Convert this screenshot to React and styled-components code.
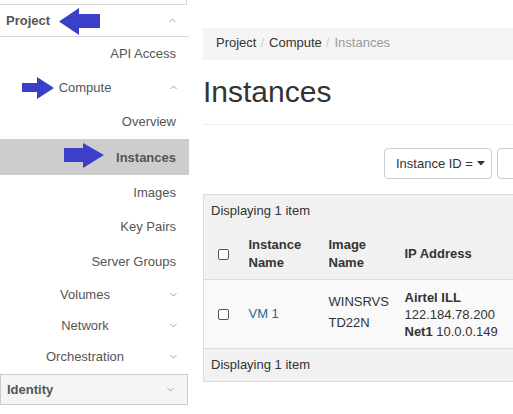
import React from 'react';
import styled, { createGlobalStyle } from 'styled-components';

const GlobalStyle = createGlobalStyle`
  html, body {
    margin: 0;
    padding: 0;
    background: #fff;
    overflow: hidden;
  }
  body {
    font-family: "Liberation Sans", Arial, sans-serif;
    font-size: 13px;
    color: #333;
  }
`;

const Page = styled.div`
  display: flex;
  width: 513px;
  height: 414px;
  overflow: hidden;
`;

const Sidebar = styled.nav`
  position: relative;
  width: 189px;
  flex-shrink: 0;
  display: flex;
  flex-direction: column;
`;

const TopEdge = styled.div`
  height: 4px;
  width: 186px;
  border-bottom: 1px solid #d6d6d6;
  border-right: 1px solid #d6d6d6;
`;

const PanelHead = styled.div`
  display: flex;
  align-items: center;
  justify-content: space-between;
  height: ${(p) => p.h}px;
  padding: 0 13px 0 6px;
  font-weight: bold;
  color: #555;
  background: ${(p) => (p.boxed ? '#f5f5f5' : '#fff')};
  border-bottom: 1px solid #d6d6d6;
  ${(p) =>
    p.boxed &&
    `
    border: 1px solid #ccc;
    width: 188px;
    box-sizing: border-box;
    margin-top: 3px;
  `}
`;

const GroupHead = styled.div`
  display: flex;
  align-items: center;
  height: ${(p) => p.h}px;
  color: #555;
  span {
    width: 170px;
    text-align: center;
  }
`;

const Item = styled.div`
  display: flex;
  align-items: center;
  justify-content: flex-end;
  height: ${(p) => p.h}px;
  padding-right: 13px;
  color: #555;
  background: ${(p) => (p.active ? '#cdcdcd' : 'transparent')};
  font-weight: ${(p) => (p.active ? 'bold' : 'normal')};
`;

const Arrow = styled.svg`
  position: absolute;
  left: ${(p) => p.x}px;
  top: ${(p) => p.y}px;
`;

const Caret = ({ up }) => (
  <svg width="7" height="5" viewBox="0 0 7 5">
    <path
      d={up ? 'M0.5 4 L3.5 1 L6.5 4' : 'M0.5 1 L3.5 4 L6.5 1'}
      fill="none"
      stroke="#a0a0a0"
      strokeWidth="1"
    />
  </svg>
);

const Main = styled.main`
  margin-left: 14px;
  width: 420px;
  flex-shrink: 0;
`;

const Breadcrumb = styled.div`
  margin-top: 28px;
  height: 32px;
  box-sizing: border-box;
  background: #f5f5f5;
  display: flex;
  align-items: flex-start;
  padding: 7px 0 0 13px;
  line-height: 15px;
  color: #333;
  white-space: nowrap;
`;

const Sep = styled.span`
  color: #ccc;
  padding: 0 5px 0 4px;
`;

const Current = styled.span`
  color: #999;
`;

const Heading = styled.h1`
  margin: 15px 0 0;
  padding-bottom: 16px;
  font-size: 30px;
  line-height: 33px;
  font-weight: normal;
  color: #333;
  border-bottom: 1px solid #eee;
`;

const Toolbar = styled.div`
  display: flex;
  margin: 23px 0 0 181px;
  gap: 5px;
`;

const FilterButton = styled.div`
  display: flex;
  align-items: center;
  height: 31px;
  width: 108px;
  box-sizing: border-box;
  border: 1px solid #ccc;
  border-radius: 4px;
  padding-left: 11px;
  color: #333;
  white-space: nowrap;
  svg {
    margin-left: 4px;
  }
`;

const FilterInput = styled.div`
  height: 31px;
  width: 60px;
  box-sizing: border-box;
  border: 1px solid #ccc;
  border-radius: 4px 0 0 4px;
`;

const Table = styled.table`
  margin-top: 15px;
  border-collapse: collapse;
  width: 420px;
  border: 1px solid #ddd;
  background: #f1f1f1;
  table-layout: fixed;
  th,
  td {
    text-align: left;
    vertical-align: middle;
    padding: 0 8px;
    line-height: 18px;
  }
  th {
    font-weight: bold;
    color: #333;
  }
`;

const InfoRow = styled.tr`
  height: ${(p) => p.h}px;
  td {
    padding-left: 7px;
    border-top: ${(p) => (p.top ? '1px solid #ddd' : 'none')};
  }
`;

const HeadRow = styled.tr`
  height: 52px;
  th {
    padding-top: 2px;
  }
`;

const DataRow = styled.tr`
  height: 69px;
  background: #f9f9f9;
  td {
    border-top: 1px solid #ddd;
    color: #333;
  }
`;

const ImageCell = styled.td`
  && {
    vertical-align: top;
    padding-top: 11px;
    line-height: 21px;
  }
`;

const IpCell = styled.td`
  && {
    line-height: 17px;
  }
`;

const Check = styled.span`
  display: inline-block;
  width: 9px;
  height: 9px;
  border: 1px solid #555;
  border-radius: 2px;
  margin-left: 6px;
  background: #fff;
  vertical-align: middle;
`;

const Link = styled.span`
  color: #2a6496;
`;

const Bold = styled.b`
  font-weight: bold;
`;

export default function App() {
  return (
    <Page>
      <GlobalStyle />
      <Sidebar>
        <TopEdge />
        <PanelHead h={31}>
          Project
          <Caret up />
        </PanelHead>
        <Item h={33}>API Access</Item>
        <GroupHead h={34}>
          <span>Compute</span>
          <Caret up />
        </GroupHead>
        <Item h={35}>Overview</Item>
        <Item h={36} active>
          Instances
        </Item>
        <Item h={34}>Images</Item>
        <Item h={35}>Key Pairs</Item>
        <Item h={35}>Server Groups</Item>
        <GroupHead h={31}>
          <span>Volumes</span>
          <Caret />
        </GroupHead>
        <GroupHead h={31}>
          <span>Network</span>
          <Caret />
        </GroupHead>
        <GroupHead h={30}>
          <span>Orchestration</span>
          <Caret />
        </GroupHead>
        <PanelHead h={31} boxed>
          Identity
          <Caret />
        </PanelHead>

        <Arrow x={59} y={8} width="42" height="27" viewBox="0 0 42 27">
          <polygon points="0,13.5 20,0 20,6 41,6 41,20 20,20 20,27" fill="#3c40c6" />
        </Arrow>
        <Arrow x={22} y={77} width="33" height="22" viewBox="0 0 33 22">
          <polygon points="0,6 15,6 15,0 32,11 15,22 15,15 0,15" fill="#3c40c6" />
        </Arrow>
        <Arrow x={64} y={143} width="41" height="26" viewBox="0 0 41 26">
          <polygon points="0,5 19,5 19,0 40,12 19,25 19,19 0,19" fill="#3c40c6" />
        </Arrow>
      </Sidebar>

      <Main>
        <Breadcrumb>
          Project<Sep>/</Sep>Compute<Sep>/</Sep>
          <Current>Instances</Current>
        </Breadcrumb>
        <Heading>Instances</Heading>
        <Toolbar>
          <FilterButton>
            Instance ID =
            <svg width="8" height="5" viewBox="0 0 8 5">
              <polygon points="0,0 8,0 4,4.5" fill="#333" />
            </svg>
          </FilterButton>
          <FilterInput />
        </Toolbar>
        <Table>
          <colgroup>
            <col style={{ width: 37 }} />
            <col style={{ width: 80 }} />
            <col style={{ width: 76 }} />
            <col />
          </colgroup>
          <tbody>
            <InfoRow h={33}>
              <td colSpan={4}>Displaying 1 item</td>
            </InfoRow>
            <HeadRow>
              <th>
                <Check />
              </th>
              <th>
                Instance
                <br />
                Name
              </th>
              <th>
                Image
                <br />
                Name
              </th>
              <th>IP Address</th>
            </HeadRow>
            <DataRow>
              <td>
                <Check />
              </td>
              <td>
                <Link>VM 1</Link>
              </td>
              <ImageCell>
                WINSRVS
                <br />
                TD22N
              </ImageCell>
              <IpCell>
                <Bold>Airtel ILL</Bold>
                <br />
                122.184.78.200
                <br />
                <Bold>Net1</Bold> 10.0.0.149
              </IpCell>
            </DataRow>
            <InfoRow h={33} top>
              <td colSpan={4}>Displaying 1 item</td>
            </InfoRow>
          </tbody>
        </Table>
      </Main>
    </Page>
  );
}
